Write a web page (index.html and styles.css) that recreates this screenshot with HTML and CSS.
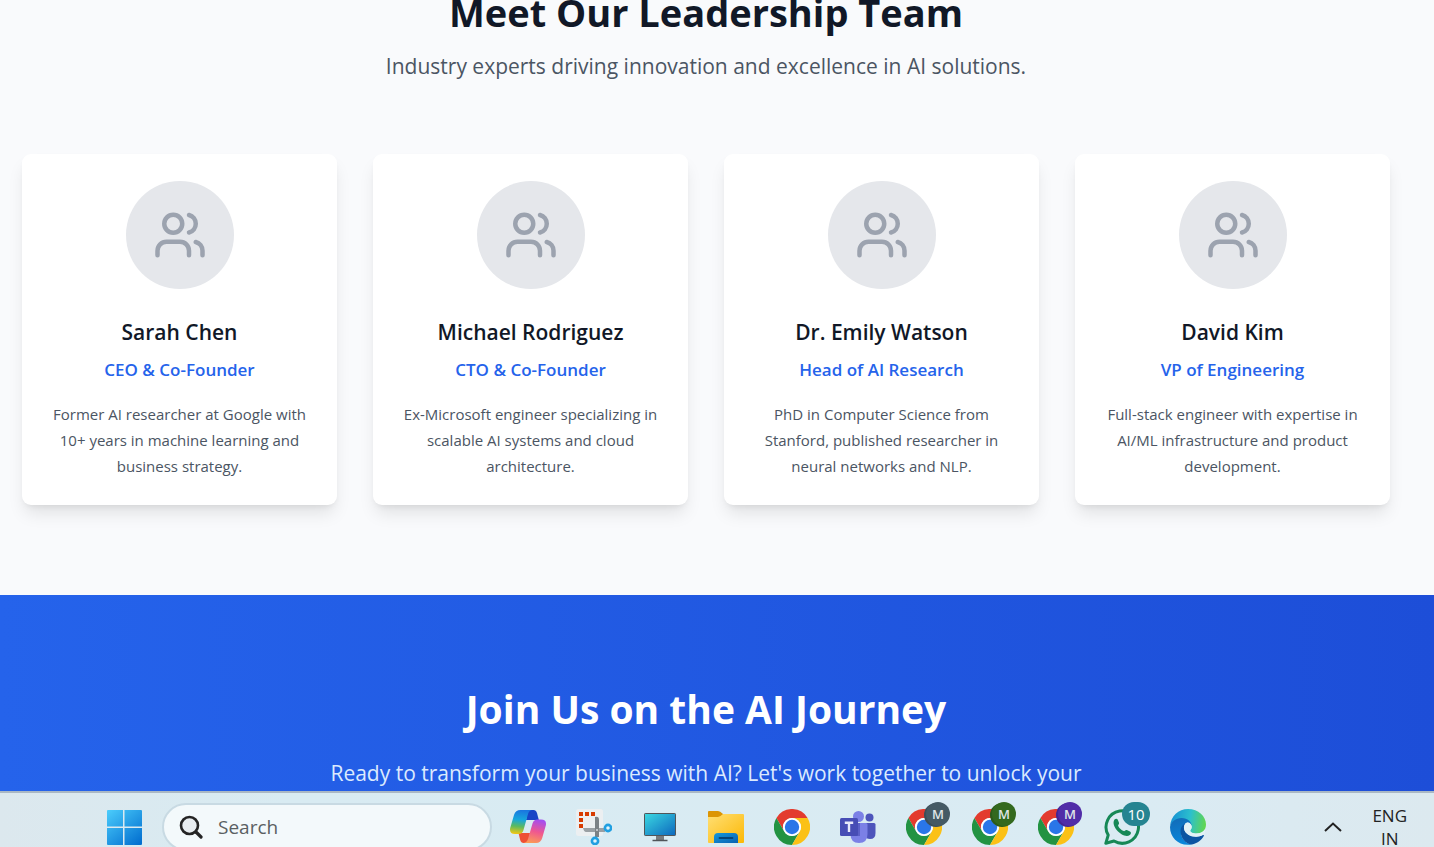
FILE: index.html
```html
<!DOCTYPE html>
<html lang="en">
<head>
<meta charset="utf-8">
<title>Leadership Team</title>
<link rel="stylesheet" href="styles.css">
</head>
<body>
<svg class="defs" aria-hidden="true">
  <symbol id="users" viewBox="0 0 24 24"><g fill="none" stroke="currentColor" stroke-width="2" stroke-linecap="round" stroke-linejoin="round"><path d="M16 21v-2a4 4 0 0 0-4-4H6a4 4 0 0 0-4 4v2"/><circle cx="9" cy="7" r="4"/><path d="M22 21v-2a4 4 0 0 0-3-3.87"/><path d="M16 3.13a4 4 0 0 1 0 7.75"/></g></symbol>
  <symbol id="chrome" viewBox="0 0 36 36"><path fill="#e33b2e" d="M2.4 9A18 18 0 0 1 33.6 9H18a9 9 0 0 0-7.8 13.5z"/><path fill="#229342" d="M2.4 9A18 18 0 0 0 18 36l7.8-13.5a9 9 0 0 1-15.6 0z"/><path fill="#fbc116" d="M33.6 9A18 18 0 0 1 18 36l7.8-13.5A9 9 0 0 0 18 9z"/><circle cx="18" cy="18" r="9" fill="#fff"/><circle cx="18" cy="18" r="7.2" fill="#2a76e8"/></symbol>
</svg>
<main class="page">
  <section class="team">
    <h2 class="title">Meet Our Leadership Team</h2>
    <p class="subtitle">Industry experts driving innovation and excellence in AI solutions.</p>
    <div class="cards">
      <article class="card">
        <div class="avatar"><svg><use href="#users"/></svg></div>
        <h3 class="name">Sarah Chen</h3>
        <p class="role">CEO &amp; Co-Founder</p>
        <p class="bio">Former AI researcher at Google with 10+ years in machine learning and business strategy.</p>
      </article>
      <article class="card">
        <div class="avatar"><svg><use href="#users"/></svg></div>
        <h3 class="name">Michael Rodriguez</h3>
        <p class="role">CTO &amp; Co-Founder</p>
        <p class="bio">Ex-Microsoft engineer specializing in scalable AI systems and cloud architecture.</p>
      </article>
      <article class="card">
        <div class="avatar"><svg><use href="#users"/></svg></div>
        <h3 class="name">Dr. Emily Watson</h3>
        <p class="role">Head of AI Research</p>
        <p class="bio">PhD in Computer Science from Stanford, published researcher in neural networks and NLP.</p>
      </article>
      <article class="card">
        <div class="avatar"><svg><use href="#users"/></svg></div>
        <h3 class="name">David Kim</h3>
        <p class="role">VP of Engineering</p>
        <p class="bio">Full-stack engineer with expertise in AI/ML infrastructure and product development.</p>
      </article>
    </div>
  </section>
  <section class="cta">
    <h2 class="title cta-title">Join Us on the AI Journey</h2>
    <p class="subtitle cta-text">Ready to transform your business with AI? Let's work together to unlock your</p>
  </section>
</main>
<footer class="taskbar">
  <button class="app" aria-label="Start">
    <svg viewBox="0 0 36 36"><defs><linearGradient id="win" gradientUnits="userSpaceOnUse" x1="2" y1="0" x2="32" y2="36"><stop offset="0" stop-color="#4bcdfc"/><stop offset="1" stop-color="#0370d0"/></linearGradient></defs><path fill="url(#win)" d="M2 1h15v16.500H1V2q0-1 1-1zM18.500 1H35q1 0 1 1v15.500H18.500zM1 19h16v17H2q-1 0-1-1zM18.500 19H36v16q0 1-1 1H18.500z"/></svg>
  </button>
  <label class="search">
    <svg viewBox="0 0 24 24" fill="none" stroke="#242424" stroke-width="2.600" stroke-linecap="round"><circle cx="10.500" cy="10.500" r="8.500" fill="#e8edf0"/><path stroke-width="3.200" d="M17 17l5 5"/></svg>
    <input type="text" placeholder="Search" aria-label="Search">
  </label>
  <nav class="apps" aria-label="Apps">
    <button class="app" aria-label="Copilot">
      <svg viewBox="0 0 36 36"><defs><linearGradient id="cpl" x1=".4" y1="0" x2=".3" y2="1"><stop offset="0" stop-color="#1a76e0"/><stop offset=".4" stop-color="#17a7dc"/><stop offset=".68" stop-color="#5bba5f"/><stop offset="1" stop-color="#f4c713"/></linearGradient><linearGradient id="cpr" x1=".6" y1="0" x2=".35" y2="1"><stop offset="0" stop-color="#a44df0"/><stop offset=".5" stop-color="#ef5790"/><stop offset="1" stop-color="#fb9b58"/></linearGradient></defs>
      <path fill="#1744c5" d="M18 1h5.500q2.500 0 3.500 3l1.800 7H16z"/><path fill="#ee5035" d="M18.500 34h-5q-2.500 0-3.300-3L8.500 24H20z"/><path fill="url(#cpl)" d="M10.500 1H22q-3 .5-4 4l-4.500 16q-1 4-5 4H5q-6 0-4.800-6L4 6q1.500-5 6.500-5z"/><path fill="url(#cpr)" d="M26 34H13.500q3.500-.5 4.500-4l4.500-15.500q1.200-4 5-4H31q6 0 4.800 6L32.200 29q-1.400 5-6.200 5z"/></svg>
    </button>
    <button class="app" aria-label="Snipping Tool">
      <svg viewBox="0 0 36 36"><rect width="27" height="27" rx="2.500" fill="#eceff1"/><path fill="#d83b01" d="M3 3h4v4H3zM9 3h4v4H9zM15 3h4v4h-4zM3 9h4v4H3zM3 15h4v4H3z"/><path fill="#9aa0a4" d="M7 19h22v4H10q-2 0-3-4z"/><path fill="#7b8185" d="M19 8q4-1 4 3v17h-4z"/><circle cx="21" cy="21" r="1" fill="#d5d9dc"/><g fill="#e0f4fb" stroke="#209fe1" stroke-width="2.600"><circle cx="32" cy="19" r="3.100"/><circle cx="19" cy="32" r="3.100"/></g></svg>
    </button>
    <button class="app" aria-label="Desktop">
      <svg viewBox="0 0 36 36"><defs><linearGradient id="pc" x1="0" y1="0" x2="1" y2="1"><stop offset="0" stop-color="#3bd9e2"/><stop offset="1" stop-color="#0c67bd"/></linearGradient></defs><path fill="#777b7e" d="M14 27h8v4h-8z"/><path stroke="#505559" stroke-width="1.500" d="M10.500 31.500h15"/><rect x="2.500" y="4.500" width="31" height="22" rx=".7" fill="url(#pc)" stroke="#505559"/></svg>
    </button>
    <button class="app" aria-label="File Explorer">
      <svg viewBox="0 0 36 36"><defs><linearGradient id="fol" x1="0" y1="0" x2="1" y2="1"><stop offset="0" stop-color="#ffdf75"/><stop offset="1" stop-color="#fcb805"/></linearGradient><linearGradient id="dock" x1="0" y1="0" x2="1" y2="1"><stop offset="0" stop-color="#1598dc"/><stop offset="1" stop-color="#0961b1"/></linearGradient></defs><path fill="#dc9505" d="M0 3q0-1 1-1h9q2 0 5 3l3 3-6 2H0z"/><path fill="url(#fol)" d="M0 8h10q2 0 5-3h20q1 0 1 1v27q0 1-1 1H1q-1 0-1-1z"/><path fill="url(#dock)" d="M6 34v-6q0-4 4-4h16q4 0 4 4v6z"/><path stroke="#064579" stroke-width="1.800" stroke-linecap="round" d="M11.500 29h13"/></svg>
    </button>
    <button class="app" aria-label="Chrome"><svg><use href="#chrome"/></svg></button>
    <button class="app" aria-label="Teams">
      <svg viewBox="0 0 36 36"><g fill="#4d54bb"><circle cx="29.500" cy="8.500" r="4"/><path d="M25 14h9q1.500 0 1.500 1.500V24q0 6-5.500 6-4 0-5-3z"/></g><g fill="#7b80e6"><circle cx="18.500" cy="7.500" r="5.500"/><path d="M11 14h15q1.500 0 1.500 1.500V25q0 9-8.500 9t-8.500-9z"/></g><path fill="#5b60c7" d="M11 14h9v13h-9z"/><rect y="9" width="18" height="18" rx="1.500" fill="#474db5"/><path fill="none" stroke="#e8e9fa" stroke-width="2.400" d="M4.800 13.800h8.400M9 13.500v9.500"/></svg>
    </button>
    <button class="app" aria-label="Chrome, profile M"><svg><use href="#chrome"/></svg><span class="badge slate">M</span></button>
    <button class="app" aria-label="Chrome, second profile M"><svg><use href="#chrome"/></svg><span class="badge green">M</span></button>
    <button class="app" aria-label="Chrome, third profile M"><svg><use href="#chrome"/></svg><span class="badge purple">M</span></button>
    <button class="app" aria-label="WhatsApp, 10 unread">
      <svg viewBox="0 0 36 36"><path fill="none" stroke="#168856" stroke-width="3" stroke-linejoin="round" d="M1.800 34.300l2.400-8.200A16.200 16.200 0 1 1 10 32z"/><path fill="#168856" d="M10.500 10.500c1.200-1.300 2.700-1.100 3.300.3l1.200 2.900c.5 1.300-1.400 2.100-.8 3.200 1.300 2.400 3 4 5.500 5.200 1 .4 1.900-1.600 3.100-1.100l3.200 1.500c1.600.8 1 2.500-.2 3.500-5.800 4.500-20-8.600-15.300-15.500z"/></svg><span class="badge count">10</span>
    </button>
    <button class="app" aria-label="Edge">
      <svg viewBox="0 0 36 36"><defs><linearGradient id="e1" x1="0" y1=".4" x2="1" y2=".5"><stop offset="0" stop-color="#168fd4"/><stop offset=".55" stop-color="#2cc0cd"/><stop offset="1" stop-color="#62d64e"/></linearGradient><linearGradient id="e2" x1=".3" y1="0" x2=".5" y2="1"><stop offset="0" stop-color="#126cb8"/><stop offset="1" stop-color="#0a87dc"/></linearGradient></defs><path fill="url(#e1)" d="M0 17.500C.8 7 8.500 0 18 0c10.500 0 18 7.500 18 15.500 0 6-4.500 9-9.500 9-4 0-6.300-1.500-6.300-2.800 0-1 1.500-1.500 1.500-4 0-3.500-4.500-7-10.200-7C5.500 10.700 1.500 13.500 0 17.500z"/><path fill="url(#e2)" d="M0 18c1-5.500 6-9 11.500-9 6.300 0 10.200 4 10.200 8-1-2.500-3-3.500-4.500-3.500-2.200 1.300-6.200 4.500-6.200 10 0 6.500 5.500 11.500 11 11.900C10 38 0 29.500 0 18z"/><path fill="#0c54a2" d="M15.500 14.200C10.500 17 10 21 11 25.500c1.300 6 6.500 10 11 9.900 5-1 9.500-4.500 11.800-8.500.4-.8-.2-1.200-1-.8C25 30 15 26.500 14 19.500c-.2-2 .3-3.900 1.500-5.300z"/><path fill="#e3f1f6" d="M15.500 14.200c3-1.800 6 .3 6.200 3.500 0 2.500-1.500 3-1.500 4 0 1.500 2.800 2.800 6.300 2.800 3.500 0 6.500-1.300 8.500-4 .5 2-.2 4.500-2.200 5.600C26 30 15 26.500 14 19.500c-.2-2 .3-3.900 1.500-5.300z"/></svg>
    </button>
  </nav>
  <div class="tray">
    <button class="chevron" aria-label="Show hidden icons"><svg viewBox="0 0 18 10" fill="none" stroke="#222" stroke-width="2"><path d="M1 9l8-7.500L17 9"/></svg></button>
    <button class="lang">ENG<br>IN</button>
  </div>
</footer>
</body>
</html>
```

FILE: styles.css
```css
* { box-sizing: border-box; margin: 0; padding: 0; }
body {
  display: flex;
  flex-direction: column;
  height: 100vh;
  overflow: hidden;
  font-family: "Open Sans", "Noto Sans", sans-serif;
  background: #f9fafc;
}
button, input { font: inherit; color: inherit; border: 0; background: none; }
svg { display: block; }
.defs { position: absolute; width: 0; height: 0; }
.page { flex: 1; min-height: 0; overflow: hidden; display: flex; flex-direction: column; }
.team { padding: 0 44px 90px 22px; text-align: center; }
.title { font-size: 38px; line-height: 24px; font-weight: 700; color: #111827; }
.subtitle { margin-top: 26px; font-size: 21px; line-height: 32px; color: #4b5563; }
.cards { display: grid; grid-template-columns: repeat(4, 1fr); gap: 36px; margin-top: 72px; }
.card {
  padding: 27px 27px 26px;
  border-radius: 9px;
  background: #fff;
  box-shadow: 0 11px 17px -3px rgba(0, 0, 0, .1), 0 4px 7px -4px rgba(0, 0, 0, .1);
}
.avatar {
  display: grid;
  place-items: center;
  width: 108px;
  height: 108px;
  margin: 0 auto 27px;
  border-radius: 50%;
  background: #e5e7eb;
  color: #9ca3af;
}
.avatar svg { width: 54px; height: 54px; }
.name { font-size: 21px; line-height: 32px; font-weight: 600; color: #111827; }
.role { margin-top: 8px; font-size: 17px; line-height: 27px; font-weight: 600; color: #2563eb; }
.bio { margin-top: 18px; font-size: 15px; line-height: 26px; color: #4b5563; }
.cta {
  flex: 1;
  padding: 90px 44px 0 22px;
  text-align: center;
  background: linear-gradient(to right, #2563eb, #1d4ed8);
}
.cta-title { font-size: 39px; line-height: 48px; color: #fff; }
.cta-text { margin-top: 24px; color: #dbeafe; }

.taskbar {
  display: flex;
  align-items: flex-start;
  height: 56px;
  padding: 11px 27px 0 106px;
  overflow: hidden;
  border-top: 2px solid #aab8c4;
  background: linear-gradient(to right, #dce8ee, #d8ebf2 20%, #daebf3 80%, #dce9ef);
}
.app { position: relative; flex: none; width: 36px; height: 36px; margin-top: 5px; }
.app svg { width: 36px; height: 36px; }
.search {
  display: flex;
  align-items: center;
  gap: 15px;
  flex: 0 1 330px;
  height: 48px;
  margin: -1px 18px 0 20px;
  padding: 0 17px 0 15px;
  border: 2px solid #c8dae3;
  border-radius: 24px;
  background: #f3f9fb;
}
.search svg { flex: none; width: 24px; height: 24px; }
.search input { flex: 1; min-width: 0; font-size: 19px; color: #5a5f62; }
.search input::placeholder { color: #5a5f62; opacity: 1; }
.apps { display: flex; gap: 30px; }
.badge {
  position: absolute;
  top: -7px;
  left: 20px;
  width: 24px;
  height: 24px;
  border-radius: 12px;
  font-size: 13px;
  line-height: 24px;
  font-weight: 600;
  text-align: center;
  color: #dfe5e7;
}
.slate { background: #455a64; box-shadow: -2px 1px 0 #3b4f58; }
.green { background: #33691e; box-shadow: -2px 1px 0 #2b5a19; }
.purple { background: #512da8; box-shadow: -2px 1px 0 #452592; }
.count { left: 18px; width: 28px; font-size: 15px; font-weight: 400; color: #fff; background: #258491; }
.tray { display: flex; align-items: flex-start; gap: 30px; margin-left: auto; }
.chevron { margin-top: 18px; }
.chevron svg { width: 18px; height: 10px; }
.lang { font-size: 17px; line-height: 23px; color: #222; }
```
